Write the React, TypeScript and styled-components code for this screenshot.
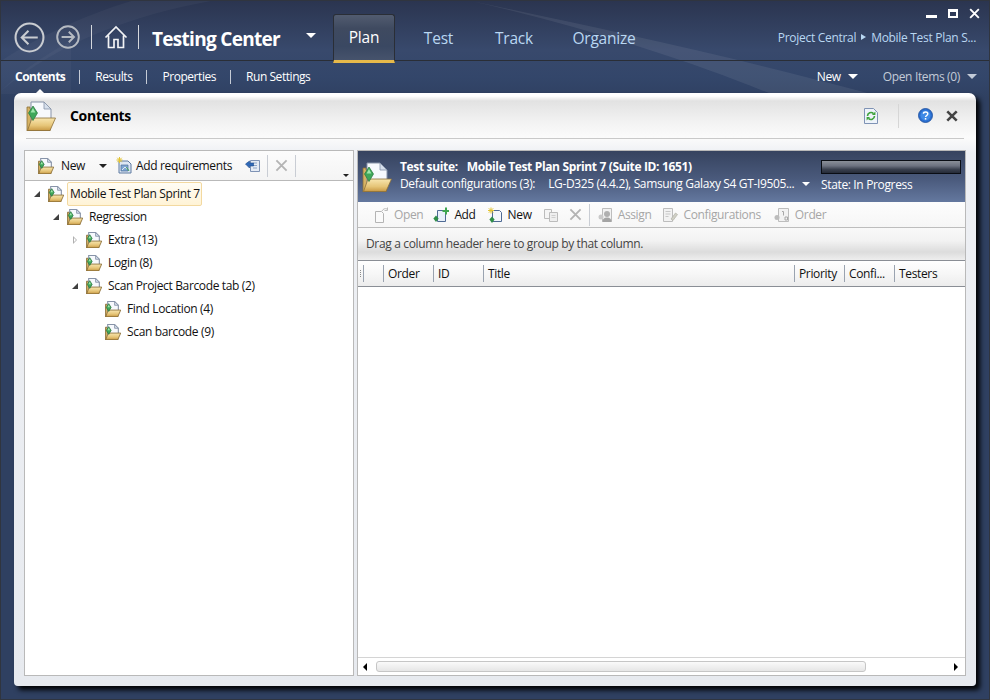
import React from 'react';
import styled, { createGlobalStyle } from 'styled-components';

const GlobalStyle = createGlobalStyle`
  html, body {
    margin: 0;
    padding: 0;
    height: 100%;
    overflow: hidden;
    background: #2f4061;
  }
  * {
    box-sizing: border-box;
  }
`;

const FONT = `"Open Sans", "Noto Sans", "Liberation Sans", sans-serif`;

const FolderIcon = ({ size = 16 }: { size?: number }) => {
  const line = size < 20 ? 2 : 1;
  return (
    <svg width={size} height={size} viewBox="0 0 30 30" style={{ flexShrink: 0 }}>
      <defs>
        <linearGradient id="folderGold" x1="0" y1="0" x2="0" y2="1">
          <stop offset="0" stopColor="#f8e6b0" />
          <stop offset=".6" stopColor="#e6c578" />
          <stop offset="1" stopColor="#c99a45" />
        </linearGradient>
      </defs>
      <path d="M1 6h3v2h20v22H1z" fill="#d6b264" stroke="#8b6f38" strokeWidth={line * 0.8} />
      <path d="M5 1h13l7 7v14H5z" fill="#f7f9fd" stroke="#8793a8" strokeWidth={line} />
      <path d="M18 1v7h7z" fill="#d6dfec" stroke="#8793a8" strokeWidth={line * 0.8} />
      <path d="M6 17h23.500L24 29.500H1.500z" fill="url(#folderGold)" stroke="#8b6f38" strokeWidth={line * 0.8} />
      <path d="M7 5l4.500 7L7 19.500 2.500 12z" fill="#3fa75a" stroke="#27753c" strokeWidth={line * 0.7} />
      <path d="M7 7l2.400 4.500H4.600z" fill="#9fe6ac" />
    </svg>
  );
};

const BackIcon = ({ size, weight }: { size: number; weight: number }) => (
  <svg width={size} height={size} viewBox="0 0 30 30" style={{ flexShrink: 0 }}>
    <circle cx="15" cy="15" r="13.5" fill="none" stroke="#c9ccd1" strokeWidth={weight} />
    <path d="M23 15H8M14 8.500L7.500 15l6.500 6.500" fill="none" stroke="#c9ccd1" strokeWidth={weight} />
  </svg>
);

const ForwardIcon = ({ size, weight }: { size: number; weight: number }) => (
  <svg width={size} height={size} viewBox="0 0 30 30" style={{ flexShrink: 0, marginLeft: 11 }}>
    <circle cx="15" cy="15" r="13.500" fill="none" stroke="#b5bac2" strokeWidth={weight} />
    <path d="M7 15h15M16 8.500l6.500 6.500-6.500 6.500" fill="none" stroke="#b5bac2" strokeWidth={weight} />
  </svg>
);

const HomeIcon = () => (
  <svg width="24" height="24" viewBox="0 0 24 24" style={{ flexShrink: 0 }}>
    <path
      d="M1.500 12.500L12 2l10.500 10.500M4.500 10.500V22.500h5.500v-8h4v8h5.500V10.500"
      fill="none"
      stroke="#f2f3f5"
      strokeWidth="1.700"
    />
  </svg>
);

const RefreshDocIcon = () => (
  <svg width="14" height="16" viewBox="0 0 14 16">
    <path d="M.5.5h9l4 4v11H.5z" fill="#eef3fa" stroke="#7f93b5" />
    <path d="M3.500 8a3.500 3.500 0 0 1 6-2.400M10.500 8a3.500 3.500 0 0 1-6 2.400" fill="none" stroke="#3ea33c" strokeWidth="1.600" />
    <path d="M8 7h3.400V3.600zM6 9H2.600v3.400z" fill="#3ea33c" />
  </svg>
);

const HelpIcon = () => (
  <svg width="15" height="15" viewBox="0 0 15 15" style={{ flexShrink: 0 }}>
    <circle cx="7.500" cy="7.500" r="7" fill="#2b6fd0" stroke="#1b4c9c" strokeWidth=".8" />
    <circle cx="7.500" cy="7.500" r="5" fill="#3f8ae6" />
    <path d="M5.400 5.800c.2-2.400 4.400-2.400 4.400 0 0 1.700-2.200 1.600-2.200 3.300" fill="none" stroke="#fff" strokeWidth="1.400" />
    <rect x="6.800" y="10" width="1.500" height="1.600" fill="#fff" />
  </svg>
);

const CrossIcon = ({ size, color, weight }: { size: number; color: string; weight: number }) => (
  <svg width={size} height={size} viewBox="0 0 14 14" style={{ flexShrink: 0 }}>
    <path d="M1.500 1.500l11 11M12.500 1.500l-11 11" stroke={color} strokeWidth={weight} fill="none" />
  </svg>
);

const AddReqIcon = () => (
  <svg width="16" height="17" viewBox="0 0 16 17">
    <path d="M3 4h9l3 3v9H3z" fill="#dce6f4" stroke="#5f7aa0" />
    <path d="M5 8h7v6H5z" fill="#7fa6d4" stroke="#4f6d96" strokeWidth=".7" />
    <path d="M6 13l3-3 2 2" stroke="#e1e9f4" fill="none" />
    <path d="M10 10.500l1.500 1 1.500 2.500" stroke="#3fa650" fill="none" />
    <path d="M3.500 0v6M.5 3h6M1.300.8l4.400 4.400M5.700.8L1.300 5.200" stroke="#e3c432" strokeWidth="1" />
  </svg>
);

const MoveIcon = () => (
  <svg width="15" height="14" viewBox="0 0 15 14">
    <path d="M5.500 1.500h9v11h-9z" fill="#e6ecf5" stroke="#7f93b5" />
    <path d="M8 4h4M8 6.500h4M8 9h4" stroke="#8fa6c8" />
    <path d="M.5 5l4-3v2h4v3h-4v2z" fill="#2f69b8" stroke="#1c4a8c" strokeWidth=".6" />
  </svg>
);

const OpenDocIcon = () => (
  <svg width="15" height="16" viewBox="0 0 15 16">
    <path d="M1.500 4.500h6l2 2v9h-8z" fill="#fafafa" stroke="#b4b4b4" />
    <path d="M8 4c1-2 3-3 5-2M13.500 .5v3h-3" fill="none" stroke="#bcbcbc" />
  </svg>
);

const AddDocIcon = () => (
  <svg width="16" height="16" viewBox="0 0 16 16">
    <path d="M4.500 3.500h6l2 2v9h-8z" fill="#e8f0fa" stroke="#4f6a94" />
    <path d="M3 8.500l2.600 3L3 15 .4 11.500z" fill="#2f8e48" />
    <path d="M9.500 3H12V.5h2V3h2v2h-2v2.500h-2V5H9.500z" fill="#3fa650" />
  </svg>
);

const NewDocIcon = () => (
  <svg width="16" height="16" viewBox="0 0 16 16">
    <path d="M5.500 3.500h7l2 2v9h-9z" fill="#f4f7fc" stroke="#4f6a94" />
    <path d="M4 .5v6M1 3.500h6M1.800 1.300l4.400 4.400M6.200 1.300L1.800 5.700" stroke="#e3c432" strokeWidth="1" />
    <path d="M5 9.500l2.600 3L5 16l-2.600-3.500z" fill="#2f8e48" />
  </svg>
);

const CopyIcon = () => (
  <svg width="16" height="14" viewBox="0 0 16 14">
    <path d="M1.500 1.500h7v9h-7z" fill="#f5f5f5" stroke="#bcbcbc" />
    <path d="M6.500 4.500h8v9h-8z" fill="#efefef" stroke="#bcbcbc" />
    <path d="M8.500 7.500h4M8.500 9.500h4" stroke="#cfcfcf" />
  </svg>
);

const AssignIcon = () => (
  <svg width="16" height="16" viewBox="0 0 16 16">
    <path d="M5.500 1.500h9v13h-9z" fill="#f2f2f2" stroke="#bdbdbd" />
    <circle cx="4" cy="10" r="2.500" fill="#c9c9c9" />
    <circle cx="10" cy="7" r="3" fill="#b0b0b0" />
    <path d="M5.500 15c0-3 1.500-4.500 4.500-4.500s4.500 1.500 4.500 4.500z" fill="#a4a4a4" />
  </svg>
);

const ConfigIcon = () => (
  <svg width="16" height="16" viewBox="0 0 16 16">
    <path d="M1.500 1.500h9v13h-9z" fill="#f2f2f2" stroke="#bdbdbd" />
    <path d="M3.500 4.500h5M3.500 7h5M3.500 9.500h3" stroke="#c8c8c8" />
    <path d="M9 12l4.500-6 2 1.500-4.500 6z" fill="#d0d0c6" stroke="#b2b2a8" strokeWidth=".7" />
  </svg>
);

const OrderIcon = () => (
  <svg width="16" height="16" viewBox="0 0 16 16">
    <path d="M4.500 1.500h10v13h-10z" fill="#f2f2f2" stroke="#bdbdbd" />
    <path d="M8 4.500h1.500v4M11 10h2.500v3H11z" fill="none" stroke="#a8a8a8" />
    <circle cx="3" cy="10.500" r="2.500" fill="#bcbcbc" />
  </svg>
);

const Window = styled.div`
  position: relative;
  width: 990px;
  height: 700px;
  overflow: hidden;
  border: 1px solid #30353f;
  font-family: ${FONT};
  background: linear-gradient(180deg, #2b3550 0%, #38496c 7%, #33466a 11%, #2f4061 14%, #2f4061 100%);
`;

const Swoosh = styled.svg`
  position: absolute;
  left: 0;
  top: 0;
  width: 990px;
  height: 700px;
  pointer-events: none;
`;

const TopBar = styled.header`
  position: relative;
  height: 60px;
  flex-shrink: 0;
  display: flex;
  align-items: stretch;
  padding-left: 13px;
  border-bottom: 1px solid #2a2e36;
`;

const NavCluster = styled.div`
  display: flex;
  align-items: center;
  padding-top: 13px;
`;

const NavDivider = styled.span<{ $left: number; $right: number }>`
  width: 1px;
  height: 24px;
  background: #d5d8dd;
  margin: 0 ${(p) => p.$right}px 0 ${(p) => p.$left}px;
`;

const AppTitle = styled.div`
  width: 146px;
  margin-top: 3px;
  font-size: 19px;
  font-weight: 700;
  letter-spacing: -0.7px;
  color: #fff;
  white-space: nowrap;
`;

const Caret = styled.span<{ $size?: number; $color?: string }>`
  display: inline-block;
  width: 0;
  height: 0;
  flex-shrink: 0;
  border-left: ${(p) => p.$size ?? 5}px solid transparent;
  border-right: ${(p) => p.$size ?? 5}px solid transparent;
  border-top: ${(p) => p.$size ?? 5}px solid ${(p) => p.$color ?? '#fff'};
`;

const TitleCaret = styled(Caret)`
  margin: 0 0 4px 8px;
`;

const Tabs = styled.nav`
  display: flex;
  align-items: flex-end;
  margin-left: 17px;
`;

const Tab = styled.div<{ $active?: boolean; $width: number }>`
  width: ${(p) => p.$width}px;
  height: ${(p) => (p.$active ? 49 : 46)}px;
  margin-bottom: ${(p) => (p.$active ? -3 : 0)}px;
  display: flex;
  align-items: center;
  justify-content: center;
  padding-top: 2px;
  padding-bottom: ${(p) => (p.$active ? 3 : 0)}px;
  font-size: 15.5px;
  letter-spacing: -0.2px;
  color: ${(p) => (p.$active ? '#fff' : '#b9d7f2')};
  position: relative;
  ${(p) =>
    p.$active &&
    `
    background: linear-gradient(180deg, #525c70 0%, #3f4a60 30%, #3a4862 70%, #46536c 100%);
    border: 1px solid #2a2e36;
    border-bottom: 3px solid #e6b94a;
    border-radius: 3px 3px 0 0;
  `}
`;

const TopRight = styled.div`
  margin-left: auto;
  display: flex;
  flex-direction: column;
  align-items: flex-end;
  padding-right: 13px;
`;

const WindowControls = styled.div`
  display: flex;
  align-items: flex-start;
  gap: 11px;
  height: 27px;
  padding: 7px 0 0;
  margin-right: -4px;
`;

const MinimizeGlyph = styled.span`
  width: 11px;
  height: 3px;
  margin-top: 7px;
  background: #fff;
`;

const MaximizeGlyph = styled.span`
  width: 10px;
  height: 9px;
  margin-top: 1px;
  border: 2px solid #fff;
  border-top-width: 3px;
`;

const Breadcrumb = styled.div`
  display: flex;
  align-items: center;
  gap: 5px;
  height: 18px;
  font-size: 12px;
  letter-spacing: -0.3px;
  color: #b9d7f2;
  white-space: nowrap;
`;

const BreadcrumbArrow = styled.span`
  width: 0;
  height: 0;
  border-top: 3.5px solid transparent;
  border-bottom: 3.5px solid transparent;
  border-left: 5px solid #b9d7f2;
`;

const SubBar = styled.div`
  position: relative;
  height: 32px;
  flex-shrink: 0;
  display: flex;
  align-items: center;
  padding: 0 12px 1px 14px;
  font-size: 12px;
  letter-spacing: -0.45px;
`;

const SubItem = styled.span<{ $active?: boolean }>`
  position: relative;
  color: #fff;
  white-space: nowrap;
  font-weight: ${(p) => (p.$active ? 700 : 400)};
  ${(p) =>
    p.$active &&
    `
    letter-spacing: -0.5px;
    &::after {
      content: '';
      position: absolute;
      left: 20px;
      bottom: -9px;
      border-left: 5px solid transparent;
      border-right: 5px solid transparent;
      border-bottom: 5px solid #fff;
    }
  `}
`;

const SubDivider = styled.span`
  width: 1px;
  height: 14px;
  background: #c5cbd6;
  margin: 0 15px 0 14px;
`;

const SubRight = styled.div`
  margin-left: auto;
  display: flex;
  align-items: center;
`;

const SubMenu = styled.span<{ $dim?: boolean; $gap: number }>`
  display: inline-flex;
  align-items: center;
  gap: 7px;
  margin-left: ${(p) => p.$gap}px;
  letter-spacing: -0.35px;
  color: ${(p) => (p.$dim ? '#c3cbd8' : '#fff')};
  white-space: nowrap;
`;

const Column = styled.div`
  position: relative;
  height: 100%;
  display: flex;
  flex-direction: column;
`;

const Panel = styled.main`
  position: relative;
  flex: 0 0 593px;
  margin: 0 13px 0 13px;
  display: flex;
  flex-direction: column;
  padding: 0 10px 10px;
  background: linear-gradient(180deg, #fff 0, #fff 3px, #e2e2e2 8px, #f3f3f3 30px, #fbfbfb 45px, #eef0f4 60px, #e7eaef 100%);
  border-radius: 7px 7px 4px 4px;
  box-shadow: 4px 4px 5px rgba(0, 0, 0, 0.95);
`;

const PanelHeader = styled.div`
  height: 46px;
  flex-shrink: 0;
  margin: 0 2px 11px;
  padding-right: 6px;
  display: flex;
  align-items: center;
  border-bottom: 1px solid #c9c9c9;
`;

const PanelTitle = styled.h1`
  margin: 0 0 0 14px;
  font-size: 14px;
  font-weight: 700;
  letter-spacing: -0.3px;
  color: #000;
`;

const HeaderActions = styled.div`
  margin-left: auto;
  display: flex;
  align-items: center;
`;

const HeaderRule = styled.span`
  width: 1px;
  height: 24px;
  background: #d6d6d6;
  margin: 0 19px 0 20px;
`;

const CloseSlot = styled.span`
  display: inline-flex;
  margin-left: 13px;
`;

const Split = styled.div`
  flex: 1;
  min-height: 0;
  display: flex;
  gap: 3px;
`;

const LeftPane = styled.section`
  width: 330px;
  flex-shrink: 0;
  display: flex;
  flex-direction: column;
  background: #fff;
  border: 1px solid #b9b9b9;
`;

const LeftToolbar = styled.div`
  position: relative;
  height: 30px;
  flex-shrink: 0;
  display: flex;
  align-items: center;
  padding-left: 13px;
  font-size: 12px;
  letter-spacing: -0.35px;
  color: #111;
  background: linear-gradient(180deg, #fcfcfc, #f4f4f4);
  border-bottom: 1px solid #b9b9b9;
`;

const ToolText = styled.span<{ $disabled?: boolean; $gap?: number }>`
  margin-left: ${(p) => p.$gap ?? 5}px;
  color: ${(p) => (p.$disabled ? '#a6a6a6' : '#111')};
  white-space: nowrap;
`;

const ToolGroup = styled.span<{ $gap?: number }>`
  display: inline-flex;
  align-items: center;
  margin-left: ${(p) => p.$gap ?? 0}px;
`;

const ToolDivider = styled.span<{ $gap: number }>`
  width: 1px;
  height: 22px;
  background: #c9cdd4;
  margin-left: ${(p) => p.$gap}px;
`;

const OverflowCaret = styled(Caret)`
  position: absolute;
  right: 4px;
  bottom: 3px;
`;

const Tree = styled.ul`
  list-style: none;
  margin: 0;
  padding: 1px 0 0;
`;

const TreeRow = styled.li<{ $level: number }>`
  height: 23px;
  display: flex;
  align-items: center;
  padding-left: ${(p) => 6 + p.$level * 19}px;
  font-size: 12px;
  letter-spacing: -0.35px;
  color: #111;
  white-space: nowrap;
`;

const Expander = styled.span<{ $state: 'open' | 'closed' | 'none' }>`
  width: 12px;
  height: 12px;
  margin-right: 5px;
  flex-shrink: 0;
  position: relative;
  ${(p) =>
    p.$state === 'open' &&
    `
    &::before {
      content: '';
      position: absolute;
      left: 3px;
      top: 3px;
      border-left: 6px solid transparent;
      border-bottom: 6px solid #404040;
    }
  `}
  ${(p) =>
    p.$state === 'closed' &&
    `
    &::before {
      content: '';
      position: absolute;
      left: 4px;
      top: 2px;
      border-top: 4px solid transparent;
      border-bottom: 4px solid transparent;
      border-left: 4px solid #b0b0b0;
    }
    &::after {
      content: '';
      position: absolute;
      left: 5px;
      top: 4px;
      border-top: 2px solid transparent;
      border-bottom: 2px solid transparent;
      border-left: 2px solid #fff;
    }
  `}
`;

const TreeLabel = styled.span<{ $selected?: boolean }>`
  margin-left: 3px;
  padding: 2px 1px 2px 2px;
  line-height: 18px;
  border: 1px solid ${(p) => (p.$selected ? '#f3d9a0' : 'transparent')};
  border-radius: 2px;
  background: ${(p) => (p.$selected ? 'linear-gradient(180deg, #fffdf5, #fff3d6)' : 'transparent')};
`;

const RightPane = styled.section`
  flex: 1;
  min-width: 0;
  display: flex;
  flex-direction: column;
  background: #fff;
  border: 1px solid #b9b9b9;
`;

const SuiteHeader = styled.div`
  height: 51px;
  flex-shrink: 0;
  display: flex;
  align-items: center;
  padding: 0 4px 0 4px;
  color: #fff;
  font-size: 12px;
  letter-spacing: -0.35px;
  background: linear-gradient(180deg, #36435f 0%, #4a5a7c 55%, #64789f 100%);
`;

const SuiteText = styled.div`
  margin: 0 0 3px 8px;
  width: 421px;
  white-space: nowrap;
`;

const SuiteLine = styled.div`
  display: flex;
  align-items: center;
  height: 17px;
`;

const SuiteTitle = styled(SuiteLine)`
  font-weight: 700;
`;

const Spaced = styled.span<{ $gap: number }>`
  margin-left: ${(p) => p.$gap}px;
`;

const SuiteCaret = styled(Caret)`
  margin-left: 8px;
`;

const SuiteState = styled.div`
  display: flex;
  flex-direction: column;
  gap: 2px;
  flex: 1;
`;

const ProgressBar = styled.div`
  height: 14px;
  border: 1px solid #0a0d14;
  background: linear-gradient(180deg, #8a8f98 0%, #6d7280 40%, #3a404e 70%, #252b38 100%);
`;

const GridToolbar = styled.div`
  height: 26px;
  flex-shrink: 0;
  display: flex;
  align-items: center;
  padding-left: 16px;
  font-size: 12px;
  letter-spacing: -0.35px;
  background: linear-gradient(180deg, #fdfdfd, #f6f6f6);
  border-bottom: 1px solid #bdbdbd;
`;

const GroupArea = styled.div`
  height: 33px;
  flex-shrink: 0;
  display: flex;
  align-items: center;
  padding: 0 0 2px 8px;
  font-size: 12px;
  letter-spacing: -0.35px;
  color: #444;
  background: linear-gradient(180deg, #f9f9f9 0%, #f2f2f2 40%, #dcdcdc 75%, #eeeeee 100%);
  border-bottom: 1px solid #8a8e95;
`;

const ColumnHeader = styled.div`
  height: 26px;
  flex-shrink: 0;
  display: grid;
  grid-template-columns: 25px 50px 50px 311px 50px 50px 1fr;
  align-items: center;
  font-size: 12px;
  letter-spacing: -0.35px;
  color: #111;
  background: linear-gradient(180deg, #ffffff 0%, #f7f7f7 50%, #ececec 100%);
  border-bottom: 1px solid #8a8e95;
`;

const HeaderCell = styled.div`
  height: 17px;
  line-height: 17px;
  padding-left: 4px;
  border-left: 1px solid #9aa3b0;
  white-space: nowrap;
`;

const GripCell = styled.div`
  height: 17px;
  width: 6px;
  border-right: 1px solid #9aa3b0;
  background: repeating-linear-gradient(180deg, #8a8a8a 0, #8a8a8a 1px, transparent 1px, transparent 2px) 2px 5px / 1px 7px no-repeat;
`;

const GridBody = styled.div`
  flex: 1;
  background: #fff;
`;

const HScroll = styled.div`
  height: 18px;
  flex-shrink: 0;
  display: flex;
  align-items: center;
  padding: 0 7px 0 5px;
  background: #fff;
  border-top: 1px solid #d4d4d4;
`;

const ScrollArrow = styled.span<{ $dir: 'left' | 'right' }>`
  width: 0;
  height: 0;
  flex-shrink: 0;
  border-top: 4px solid transparent;
  border-bottom: 4px solid transparent;
  ${(p) => (p.$dir === 'left' ? 'border-right: 4px solid #000;' : 'border-left: 4px solid #000;')}
`;

const ScrollThumb = styled.div`
  width: 490px;
  height: 11px;
  margin-left: 9px;
  border: 1px solid #c6c6c6;
  border-radius: 3px;
  background: linear-gradient(180deg, #fafafa, #e6e6e6);
`;

const ScrollEnd = styled.div`
  margin-left: auto;
  display: flex;
`;

const treeItems = [
  { label: 'Mobile Test Plan Sprint 7', level: 0, state: 'open', selected: true },
  { label: 'Regression', level: 1, state: 'open' },
  { label: 'Extra (13)', level: 2, state: 'closed' },
  { label: 'Login (8)', level: 2, state: 'none' },
  { label: 'Scan Project Barcode tab (2)', level: 2, state: 'open' },
  { label: 'Find Location (4)', level: 3, state: 'none' },
  { label: 'Scan barcode (9)', level: 3, state: 'none' },
] as const;

const App = () => (
  <>
    <GlobalStyle />
    <Window>
      <Swoosh viewBox="0 0 990 700">
        <path d="M0 90C60 40 130 15 210 0H130C80 15 30 40 0 60z" fill="#fff" opacity=".035" />
        <path d="M470 0c120 25 260 55 400 93H770C690 60 580 25 470 0z" fill="#fff" opacity=".07" />
        <path d="M0 90c20-20 50-40 70-50v53H0z" fill="#fff" opacity=".03" />
      </Swoosh>
      <Column>
        <TopBar>
          <NavCluster>
            <BackIcon size={31} weight={2} />
            <ForwardIcon size={24} weight={2.4} />
            <NavDivider $left={11} $right={12} />
            <HomeIcon />
            <NavDivider $left={10} $right={13} />
            <AppTitle>Testing Center</AppTitle>
            <TitleCaret />
          </NavCluster>
          <Tabs>
            <Tab $active $width={62}>Plan</Tab>
            <Tab $width={87}>Test</Tab>
            <Tab $width={64}>Track</Tab>
            <Tab $width={116}>Organize</Tab>
          </Tabs>
          <TopRight>
            <WindowControls>
              <MinimizeGlyph />
              <MaximizeGlyph />
              <CrossIcon size={11} color="#fff" weight={2.4} />
            </WindowControls>
            <Breadcrumb>
              Project Central
              <BreadcrumbArrow />
              Mobile Test Plan S...
            </Breadcrumb>
          </TopRight>
        </TopBar>
        <SubBar>
          <SubItem $active>Contents</SubItem>
          <SubDivider />
          <SubItem>Results</SubItem>
          <SubDivider />
          <SubItem>Properties</SubItem>
          <SubDivider />
          <SubItem>Run Settings</SubItem>
          <SubRight>
            <SubMenu $gap={0}>
              New <Caret />
            </SubMenu>
            <SubMenu $dim $gap={25}>
              Open Items (0) <Caret $color="#c3cbd8" />
            </SubMenu>
          </SubRight>
        </SubBar>
        <Panel>
          <PanelHeader>
            <FolderIcon size={30} />
            <PanelTitle>Contents</PanelTitle>
            <HeaderActions>
              <RefreshDocIcon />
              <HeaderRule />
              <HelpIcon />
              <CloseSlot>
                <CrossIcon size={12} color="#444" weight={3} />
              </CloseSlot>
            </HeaderActions>
          </PanelHeader>
          <Split>
            <LeftPane>
              <LeftToolbar>
                <FolderIcon />
                <ToolText $gap={7}>New</ToolText>
                <ToolGroup $gap={14}><Caret $size={4} $color="#222" /></ToolGroup>
                <ToolGroup $gap={9}><AddReqIcon /></ToolGroup>
                <ToolText $gap={4}>Add requirements</ToolText>
                <ToolGroup $gap={13}><MoveIcon /></ToolGroup>
                <ToolDivider $gap={7} />
                <ToolGroup $gap={7}><CrossIcon size={13} color="#b4b4b4" weight={2} /></ToolGroup>
                <ToolDivider $gap={7} />
                <OverflowCaret $size={3} $color="#222" />
              </LeftToolbar>
              <Tree>
                {treeItems.map((item) => (
                  <TreeRow key={item.label} $level={item.level}>
                    <Expander $state={item.state} />
                    <FolderIcon />
                    <TreeLabel $selected={'selected' in item}>{item.label}</TreeLabel>
                  </TreeRow>
                ))}
              </Tree>
            </LeftPane>
            <RightPane>
              <SuiteHeader>
                <FolderIcon size={30} />
                <SuiteText>
                  <SuiteTitle>
                    Test suite:<Spaced $gap={9}>Mobile Test Plan Sprint 7 (Suite ID: 1651)</Spaced>
                  </SuiteTitle>
                  <SuiteLine>
                    Default configurations (3):<Spaced $gap={13}>LG-D325 (4.4.2), Samsung Galaxy S4 GT-I9505...</Spaced>
                    <SuiteCaret $size={4} />
                  </SuiteLine>
                </SuiteText>
                <SuiteState>
                  <ProgressBar />
                  <SuiteLine>State: In Progress</SuiteLine>
                </SuiteState>
              </SuiteHeader>
              <GridToolbar>
                <OpenDocIcon />
                <ToolText $disabled>Open</ToolText>
                <ToolGroup $gap={10}><AddDocIcon /></ToolGroup>
                <ToolText>Add</ToolText>
                <ToolGroup $gap={11}><NewDocIcon /></ToolGroup>
                <ToolText>New</ToolText>
                <ToolGroup $gap={11}><CopyIcon /></ToolGroup>
                <ToolGroup $gap={10}><CrossIcon size={13} color="#b4b4b4" weight={2} /></ToolGroup>
                <ToolDivider $gap={7} />
                <ToolGroup $gap={7}><AssignIcon /></ToolGroup>
                <ToolText $disabled>Assign</ToolText>
                <ToolGroup $gap={11}><ConfigIcon /></ToolGroup>
                <ToolText $disabled>Configurations</ToolText>
                <ToolGroup $gap={13}><OrderIcon /></ToolGroup>
                <ToolText $disabled>Order</ToolText>
              </GridToolbar>
              <GroupArea>Drag a column header here to group by that column.</GroupArea>
              <ColumnHeader>
                <GripCell />
                <HeaderCell>Order</HeaderCell>
                <HeaderCell>ID</HeaderCell>
                <HeaderCell>Title</HeaderCell>
                <HeaderCell>Priority</HeaderCell>
                <HeaderCell>Confi...</HeaderCell>
                <HeaderCell>Testers</HeaderCell>
              </ColumnHeader>
              <GridBody />
              <HScroll>
                <ScrollArrow $dir="left" />
                <ScrollThumb />
                <ScrollEnd><ScrollArrow $dir="right" /></ScrollEnd>
              </HScroll>
            </RightPane>
          </Split>
        </Panel>
      </Column>
    </Window>
  </>
);

export default App;
